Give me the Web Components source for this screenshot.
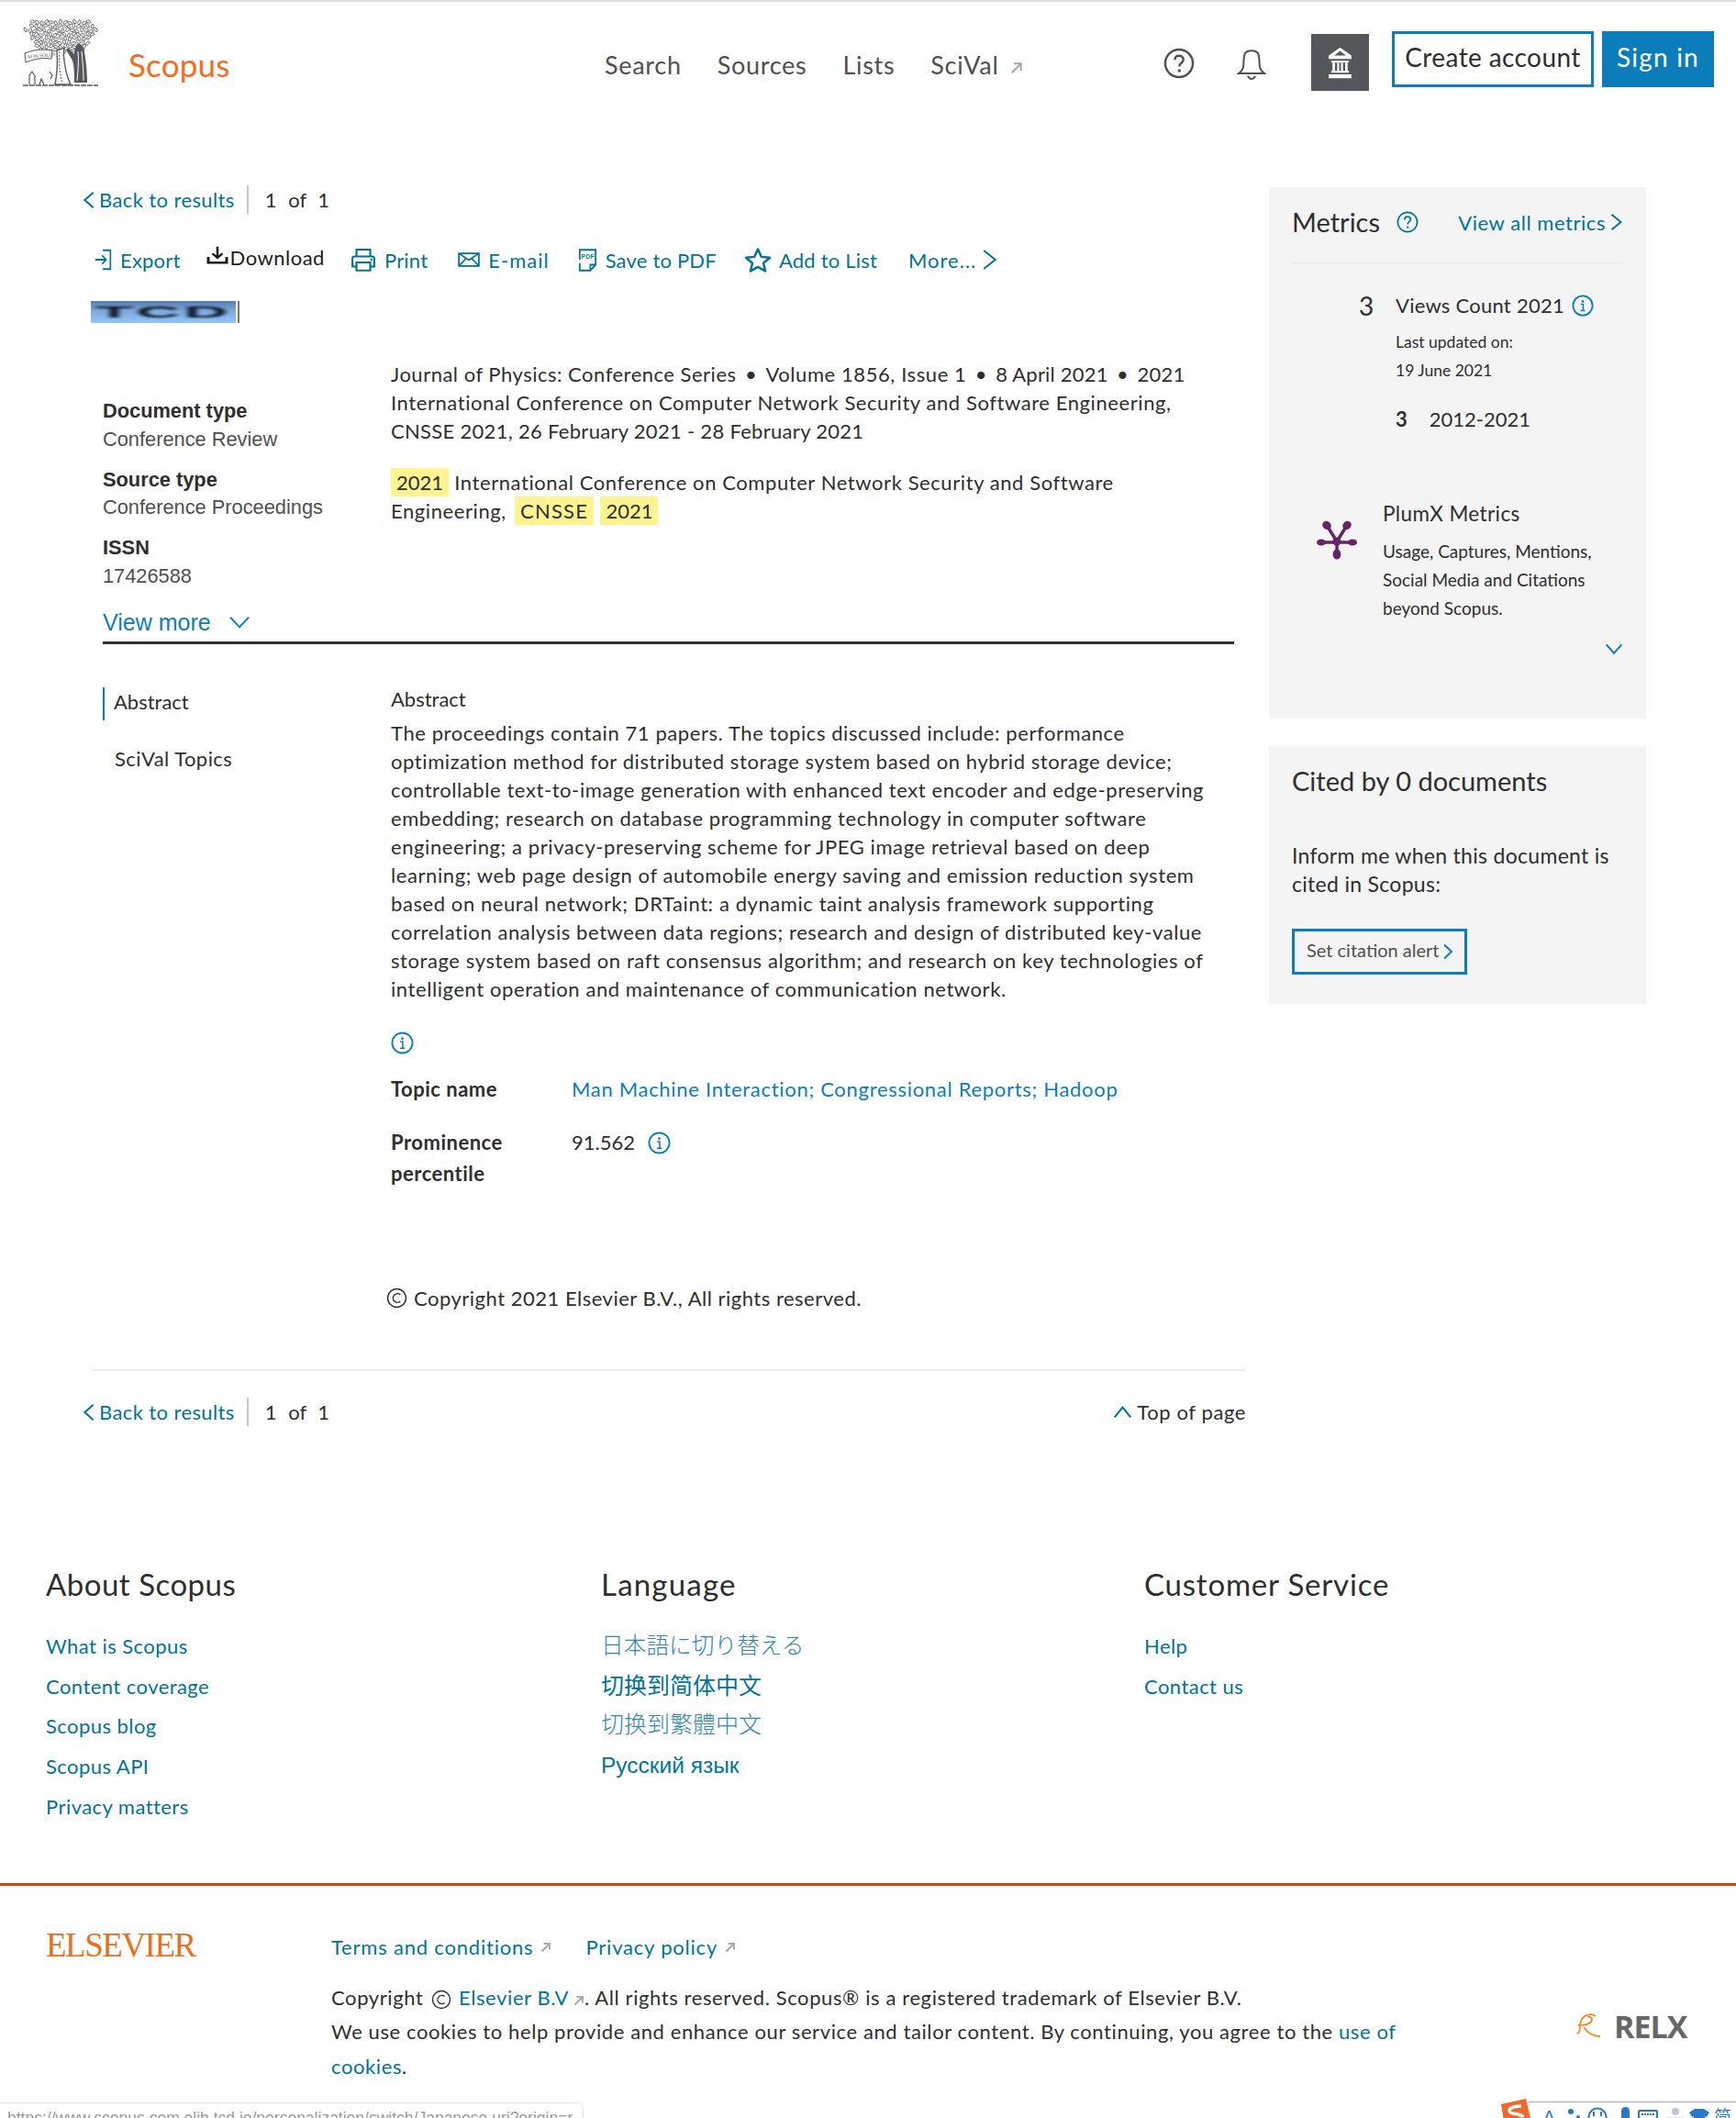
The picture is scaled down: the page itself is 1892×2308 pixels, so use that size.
<!DOCTYPE html>
<html lang="en">
<head>
<meta charset="utf-8">
<title>Scopus - Document details</title>
<style>
  html, body { margin: 0; padding: 0; background: #fff; }
  html { height: 2308px; overflow: hidden; }
  body { position: relative; height: 2308px; overflow: hidden; font-family: Lato, "Noto Sans", sans-serif; font-size: 22px; color: #2e2e2e; }
  sc-main { display: flex; padding-top: 62px; }
</style>
</head>
<body>
<sc-header></sc-header>
<sc-main>
  <sc-document></sc-document>
  <sc-sidebar></sc-sidebar>
</sc-main>
<sc-footer></sc-footer>
<sc-legal></sc-legal>
<sc-overlays></sc-overlays>

<script>
// chevrons and arrows keep their stroke width when stretched
const line = (d, w) => `<path d="${d}" fill="none" stroke="currentColor" stroke-width="${w}" vector-effect="non-scaling-stroke"/>`;

// icon set, all drawn on a 24 box
const ICONS = {
  help: `<circle cx="12" cy="12" r="10.6" fill="none" stroke="currentColor" stroke-width="1.7"/><path d="M8.8 9.4c0-2 1.4-3.2 3.3-3.2s3.2 1.2 3.2 2.9c0 2.6-3.1 2.6-3.1 5.4" fill="none" stroke="currentColor" stroke-width="1.7"/><circle cx="12.2" cy="17.6" r="1.2" fill="currentColor"/>`,
  info: `<circle cx="12" cy="12" r="10.6" fill="none" stroke="currentColor" stroke-width="1.8"/><circle cx="12" cy="7.4" r="1.3" fill="currentColor"/><path d="M9.8 10.6h2.6v7M9.6 17.6h5" fill="none" stroke="currentColor" stroke-width="1.5"/>`,
  bell: line("M1.500 18.500c2.500-1.500 4-3.500 4-7 0-3 .2-5 .8-7C6.900 2.500 8.500 1.500 12 1.500s5.100 1 5.700 3c.6 2 .8 4 .8 7 0 3.500 1.500 5.500 4 7z", 2) + line("M9 20.500c.7 1.300 1.800 2.200 3 2.200s2.300-.9 3-2.200", 2),
  bank: `<path d="M12 .5 3 6.500V9h18V6.500zM3 20.500h18V23.500H3z" fill="currentColor"/><path d="M12 3 7.400 6.500h9.200z" fill="#53565a"/><path d="M5 10.500h14v1.300H5zM5 18h14v1.300H5zM6 12h2v6H6zM9.700 12h1.600v6H9.700zM12.700 12h1.600v6h-1.600zM16 12h2v6h-2z" fill="currentColor"/>`,
  ext: line("M3 21 20 4M7 4h13v13", 2),
  left: line("M20 2 4 12l16 10", 2),
  right: line("M4 2l16 10L4 22", 2),
  down: line("M2 4l10 16L22 4", 2),
  up: line("M2 20 12 4l10 16", 2),
  export: `<path d="M11 2.500h9v19h-9M2 12h12.500M10 7.500l4.800 4.500-4.800 4.500" fill="none" stroke="currentColor" stroke-width="1.800"/>`,
  download: `<path d="M12 1v14M6.500 10l5.500 5.500 5.500-5.500" fill="none" stroke="currentColor" stroke-width="2.600"/><path d="M2 14.500v7.500h20v-7.500" fill="none" stroke="currentColor" stroke-width="3"/>`,
  print: `<path d="M6 9V2.500h12V9M6 18.500H2.500V11q0-2 2-2h15q2 0 2 2v7.500H18M6 14.500h12v7.500H6z" fill="none" stroke="currentColor" stroke-width="1.700"/><circle cx="19" cy="12" r="1" fill="currentColor"/>`,
  mail: `<path d="M2 4.500h20v15H2zM2 4.500l10 8 10-8M2 19.500l7.500-9.500M22 19.500 14.500 10" fill="none" stroke="currentColor" stroke-width="1.700"/>`,
  pdf: `<path d="M3 11.500V2h18v14.500L15 22H3v-7M21 16.500h-6V22" fill="none" stroke="currentColor" stroke-width="1.800"/><text x="12" y="10.500" font-size="7" font-weight="700" text-anchor="middle" fill="currentColor" font-family="Liberation Sans">PDF</text>`,
  star: `<path d="m12 2 3 7 7.500.7-5.700 5 1.700 7.300-6.500-3.900L5.500 22l1.700-7.300-5.700-5L9 9z" fill="none" stroke="currentColor" stroke-width="2" stroke-linejoin="round"/>`,
  copy: `<circle cx="12" cy="12" r="10.400" fill="none" stroke="currentColor" stroke-width="1.500"/><path d="M16 8.300a5 5 0 1 0 0 7.400" fill="none" stroke="currentColor" stroke-width="1.500"/>`
};

// small base for the elements: markup and style in an open shadow root
class ScElement extends HTMLElement {
  connectedCallback() {
    if (this.shadowRoot) return;
    this.attachShadow({ mode: "open" });
    this.shadowRoot.innerHTML = `<style>${this.styles()}</style>${this.markup()}`;
  }
  styles() { return ":host{display:block}"; }
  markup() { return "<slot></slot>"; }
}

class ScIco extends ScElement {
  styles() {
    const w = this.getAttribute("w") || 24, h = this.getAttribute("h") || w;
    return `:host{display:inline-block;width:${w}px;height:${h}px;flex:none;line-height:0}svg{width:100%;height:100%;display:block}`;
  }
  markup() {
    return `<svg viewBox="0 0 24 24" preserveAspectRatio="none">${ICONS[this.getAttribute("name")]}</svg>`;
  }
}
customElements.define("sc-ico", ScIco);

// Elsevier tree, drawn as lots of little leaves
class ScTree extends ScElement {
  styles() { return ":host{display:block;width:84px;height:74px}svg{display:block}"; }
  markup() {
    let leaves = "";
    for (let r = 0; r < 8; r++) {
      const cols = 16 - Math.abs(r - 2) * 1.2 | 0;
      for (let c = 0; c < cols; c++) {
        const x = 42 + (c - cols / 2 + 0.5) * 5.1 + (r % 2) * 1.5;
        const y = 3.500 + r * 4.400 + ((c * 7) % 3) * 0.8;
        const rot = (c * 47 + r * 31) % 180;
        leaves += `<ellipse cx="${x.toFixed(1)}" cy="${y.toFixed(1)}" rx="2.500" ry="1.400" transform="rotate(${rot} ${x.toFixed(1)} ${y.toFixed(1)})" fill="#fff" stroke="#55585c" stroke-width=".85"/>`;
      }
    }
    return `<svg width="84" height="74" viewBox="0 0 84 74">
      ${leaves}
      <path d="M36 72c2-10 3-24 2-37l8-3c-1 5-1 9 0 14 1 8 3 18 7 26z" fill="#fff" stroke="#55585c" stroke-width="1.400"/>
      <path d="M41 36c-1 12 0 24 3 35" stroke="#55585c" stroke-width="1" stroke-dasharray="2 1.500" fill="none"/>
      <path d="M3 38q14-6 30-3l-1 9q-14-2-28 4z" fill="#fff" stroke="#55585c" stroke-width="1"/>
      <text x="6" y="44" font-size="5.500" font-family="Liberation Serif" fill="#55585c" transform="rotate(-6 6 44)">NON SOLUS</text>
      <path d="M60 28c5-1 7 3 8 9 2 11 3 24 3 33H57c0-10 0-16-2-24l-7-12 2-2 7 7c0-4 1-8 3-11z" fill="#55585c"/>
      <path d="M61 36c1 10 0 22-1 32M65 36c1 10 2 22 2 32" stroke="#fff" stroke-width="1" fill="none"/>
      <path d="M1 73h82" stroke="#55585c" stroke-width="1.600" stroke-dasharray="6 1"/>
      <path d="M8 72V62l3-4 3 5v9M19 72l2-6 3 6M30 58l3 4-2 4" stroke="#55585c" stroke-width="1.200" fill="none"/>
    </svg>`;
  }
}
customElements.define("sc-tree", ScTree);

class ScHeader extends ScElement {
  styles() {
    return `:host{display:flex;height:138px;border-top:2px solid #dcdce2;box-sizing:content-box;align-items:flex-start}
    sc-tree{margin:18px 0 0 24px}
    .brand{margin:46px 0 0 32px;font-size:35px;line-height:44px;color:#f36d21;width:110px;letter-spacing:.2px}
    nav{display:flex;gap:39px;margin:49px 0 0 409px;font-size:27px;line-height:40px;color:#505050;width:525px;letter-spacing:.7px}
    nav sc-ico{color:#a5a5a5;margin:16px 0 0 12px}
    nav span{display:flex}
    .tools{margin-left:84px;display:flex;align-items:flex-start}
    .q{margin-top:50px;color:#505050}
    .bell{margin:51px 0 0 46px;color:#505050}
    .inst{margin:35px 0 0 49px;width:63px;height:62px;background:#53565a;color:#fff;display:flex;align-items:center;justify-content:center}
    .btn{box-sizing:border-box;height:61px;margin-top:32px;font-size:28px;display:flex;align-items:center;justify-content:center}
    .create{width:220px;margin-left:25px;border:3px solid #0c7dbb;color:#2e2e2e;padding-bottom:6px;letter-spacing:.4px}
    .sign{width:122px;margin-left:9px;background:#0c7dbb;color:#fff;padding-bottom:6px;letter-spacing:1.200px}`;
  }
  markup() {
    return `<sc-tree></sc-tree><div class="brand">Scopus</div>
    <nav><span>Search</span><span>Sources</span><span>Lists</span><span>SciVal<sc-ico name="ext" w="14" h="14"></sc-ico></span></nav>
    <div class="tools">
      <sc-ico class="q" name="help" w="34"></sc-ico>
      <sc-ico class="bell" name="bell" w="32" h="35"></sc-ico>
      <div class="inst"><sc-ico name="bank" w="33" h="35"></sc-ico></div>
      <div class="btn create">Create account</div><div class="btn sign">Sign in</div>
    </div>`;
  }
}
customElements.define("sc-header", ScHeader);

// Back to results | 1 of 1, used at top and bottom of the record
class ScPager extends ScElement {
  styles() {
    return `:host{display:flex;height:31px;align-items:center;padding-left:90px;font-size:22px;line-height:30px}
    a{display:flex;align-items:center;color:#007398;gap:4px;letter-spacing:.4px}
    i{display:block;width:2px;height:31px;background:#c8c8c8;margin:0 18px 0 13px}
    b{font-weight:400;word-spacing:7px}
    .end{margin-left:auto;margin-right:25px;color:#2e2e2e;display:flex;align-items:center;gap:5px;letter-spacing:.6px}
    .end sc-ico{color:#007398}`;
  }
  markup() {
    const top = this.hasAttribute("top");
    return `<a><sc-ico name="left" w="14" h="20"></sc-ico>Back to results</a><i></i><b>1 of 1</b>
    ${top ? `<div class="end"><sc-ico name="up" w="21" h="16"></sc-ico>Top of page</div>` : ""}`;
  }
}
customElements.define("sc-pager", ScPager);

class ScActions extends ScElement {
  styles() {
    return `:host{display:flex;height:32px;margin-top:34px;padding-left:102px;gap:30px;align-items:center;color:#007398;font-size:22px;letter-spacing:.2px}
    span{display:flex;align-items:center;gap:8px}
    .ex{gap:7px}
    .dl{color:#1c1c1c;gap:2px;margin:-6px 0 0 -2px;letter-spacing:.5px}.dl sc-ico{margin-top:-4px}
    .pr{margin-left:-3px}
    .em{margin-left:2px;letter-spacing:1px}
    .mo{margin-left:4px;letter-spacing:1px}`;
  }
  markup() {
    return `<span class="ex"><sc-ico name="export" w="22" h="26"></sc-ico>Export</span>
    <span class="dl"><sc-ico name="download" w="24" h="20"></sc-ico>Download</span>
    <span class="pr"><sc-ico name="print" w="30" h="28"></sc-ico>Print</span>
    <span class="em"><sc-ico name="mail" w="26" h="22"></sc-ico>E-mail</span>
    <span><sc-ico name="pdf" w="23" h="27"></sc-ico>Save to PDF</span>
    <span><sc-ico name="star" w="30" h="29"></sc-ico>Add to List</span>
    <span class="mo">More...<sc-ico name="right" w="19" h="24" style="margin-left:-3px"></sc-ico></span>`;
  }
}
customElements.define("sc-actions", ScActions);

// the institution's low-res banner in the record
class ScBanner extends ScElement {
  styles() {
    return `:host{display:flex;margin:29px 0 0 99px;height:24px}
    div{width:158px;height:24px;background:linear-gradient(#587aac,#7fa9dd 45%,#93c6fb);overflow:hidden;display:flex;justify-content:center;align-items:center}
    span{display:block;font:700 17px/24px "Liberation Sans",sans-serif;color:#0a1220;letter-spacing:1px;transform:scale(3.900,1) translateY(1px);filter:blur(.8px)}
    i{display:block;width:2px;height:24px;background:#777;margin-left:2px}`;
  }
  markup() { return `<div><span>TCD</span></div><i></i>`; }
}
customElements.define("sc-banner", ScBanner);

class ScRecord extends ScElement {
  styles() {
    return `:host{display:grid;grid-template-columns:314px 1fr;margin:40px 0 0 112px;width:1233px;height:307px;border-bottom:3px solid #2e2e2e;line-height:31px}
    .meta{padding-top:41px;font:21.800px/30.500px "Liberation Sans",sans-serif}
    dt{font-weight:700;color:#2e2e2e;margin-top:13.500px}dt:first-child{margin-top:0}
    dd{margin:0;color:#505050}dl{margin:0}
    .more{display:flex;align-items:center;margin-top:17px;color:#0c7dbb;font-size:25px;line-height:36px;gap:19px}
    p{margin:0 0 25px;letter-spacing:.58px}
    .j1{letter-spacing:.5px}.j2{letter-spacing:.58px}.j3{letter-spacing:.2px}
    .sep{word-spacing:-1.100px;letter-spacing:.2px}
    .tight{letter-spacing:.3px}
    mark{display:inline-block;background:#fff48f;color:inherit;padding:0 6px;height:31px;letter-spacing:0}
    mark.w{letter-spacing:1.200px;margin-left:3px}
    mark.n{margin-left:1px}`;
  }
  markup() {
    return `<div class="meta"><dl>
      <dt>Document type</dt><dd>Conference Review</dd>
      <dt>Source type</dt><dd>Conference Proceedings</dd>
      <dt>ISSN</dt><dd>17426588</dd></dl>
      <div class="more">View more<sc-ico name="down" w="24" h="16"></sc-ico></div>
    </div>
    <div>
      <p><span class="j1">Journal of Physics: Conference Series</span><span class="sep"> &nbsp;•&nbsp; </span><span class="j2">Volume 1856, Issue 1</span><span class="sep"> &nbsp;•&nbsp; </span><span class="j3">8 April 2021</span><span class="sep"> &nbsp;•&nbsp; </span><span class="j3">2021</span><br>International Conference on Computer Network Security and Software Engineering,<br><span class="tight">CNSSE 2021, 26 February 2021 - 28 February 2021</span></p>
      <p><mark>2021</mark> International Conference on Computer Network Security and Software<br>Engineering, <mark class="w">CNSSE</mark> <mark class="n">2021</mark></p>
    </div>`;
  }
}
customElements.define("sc-record", ScRecord);

class ScAbstract extends ScElement {
  styles() {
    return `:host{display:grid;grid-template-columns:314px 1fr;margin-left:112px;line-height:31px}
    .side{padding-top:47px}
    .cur{border-left:2px solid #0c7dbb;padding-left:10px;height:36px;line-height:32px}
    .sc{margin:26px 0 0 13px;line-height:32px;letter-spacing:.45px}
    .body{padding-top:44px}
    p{margin:6px 0 0;letter-spacing:.58px}
    .i{display:block;margin-top:31px;color:#0c7dbb}
    .row{display:grid;grid-template-columns:197px 1fr;margin-top:22px;line-height:31px}
    .row + .row{margin-top:26px;line-height:34px}
    .lab{font-weight:700;color:#2e2e2e;letter-spacing:.5px}
    a{color:#0c7dbb;letter-spacing:.7px}
    .val{display:flex;align-items:flex-start;gap:14px}
    .val sc-ico{color:#0c7dbb;margin-top:5px}
    .copy{display:flex;align-items:center;gap:7px;margin:103px 0 0 -5px;letter-spacing:.5px}`;
  }
  markup() {
    return `<div class="side"><div class="cur">Abstract</div><div class="sc">SciVal Topics</div></div>
    <div class="body">
      <div>Abstract</div>
      <p>The proceedings contain 71 papers. The topics discussed include: performance<br>optimization method for distributed storage system based on hybrid storage device;<br>controllable text-to-image generation with enhanced text encoder and edge-preserving<br>embedding; research on database programming technology in computer software<br>engineering; a privacy-preserving scheme for JPEG image retrieval based on deep<br>learning; web page design of automobile energy saving and emission reduction system<br>based on neural network; DRTaint: a dynamic taint analysis framework supporting<br>correlation analysis between data regions; research and design of distributed key-value<br>storage system based on raft consensus algorithm; and research on key technologies of<br>intelligent operation and maintenance of communication network.</p>
      <sc-ico class="i" name="info" w="25"></sc-ico>
      <div class="row"><div class="lab">Topic name</div><a>Man Machine Interaction; Congressional Reports; Hadoop</a></div>
      <div class="row"><div class="lab">Prominence<br>percentile</div><div class="val">91.562<sc-ico name="info" w="25"></sc-ico></div></div>
      <div class="copy"><sc-ico name="copy" w="23"></sc-ico>Copyright 2021 Elsevier B.V., All rights reserved.</div>
    </div>`;
  }
}
customElements.define("sc-abstract", ScAbstract);

class ScDocument extends ScElement {
  styles() {
    return `:host{display:block;width:1383px;flex:none}
    hr{border:0;height:2px;background:#eee;margin:62px 0 29px 99px;width:1259px}`;
  }
  markup() {
    return `<sc-pager></sc-pager><sc-actions></sc-actions><sc-banner></sc-banner>
    <sc-record></sc-record><sc-abstract></sc-abstract><hr><sc-pager top></sc-pager>`;
  }
}
customElements.define("sc-document", ScDocument);

class ScMetrics extends ScElement {
  styles() {
    return `:host{display:block;box-sizing:border-box;width:411px;height:579px;margin-top:2px;background:#f4f4f4;padding:20px 25px 0;color:#2e2e2e}
    .top{display:flex;align-items:center;height:36px;padding-bottom:26px;border-bottom:2px solid #eee}
    .top h2{font-size:29px;font-weight:400;margin:0;line-height:36px}
    .top sc-ico{color:#007398}
    .top .q{margin-left:18px}
    .all{margin-left:auto;color:#007398;display:flex;align-items:center;gap:4px;font-size:22px;letter-spacing:.55px}
    .v{display:flex;margin-top:29px;line-height:32px;font-size:22px;letter-spacing:.25px}
    .n{font-size:28px;width:40px;text-align:left;margin-left:73px}
    .v sc-ico{color:#0c7dbb;margin:4px 0 0 8px}
    .sub{margin:8px 0 0 113px;font-size:17.500px;line-height:31px}
    .range{margin:22px 0 0 113px;font-size:22px;line-height:32px;display:flex;gap:24px}
    .range b{font-weight:700}
    .plum{display:flex;margin-top:70px}
    .plum svg{margin:24px 0 0 27px;flex:none}
    .ptx{margin-left:28px}
    .ptx div{font-size:22.500px;line-height:34px;letter-spacing:.4px}
    .ptx p{margin:8px 0 0;font-size:19px;line-height:31px}
    .chev{display:flex;justify-content:flex-end;margin-top:22px;color:#0c7dbb}`;
  }
  markup() {
    return `<div class="top"><h2>Metrics</h2><sc-ico class="q" name="help" w="24"></sc-ico>
      <div class="all">View all metrics<sc-ico name="right" w="15" h="20"></sc-ico></div></div>
    <div class="v"><div class="n">3</div>Views Count 2021<sc-ico name="info" w="24"></sc-ico></div>
    <div class="sub">Last updated on:<br>19 June 2021</div>
    <div class="range"><b>3</b>2012-2021</div>
    <div class="plum">
      <svg width="44" height="44" viewBox="0 0 44 44"><g stroke="#662266" stroke-linecap="round"><path d="M22 23 12 7M22 23 32 7M22 24H5M22 24h17M22 24v12" stroke-width="3.400"/></g>
      <g fill="#662266"><ellipse cx="11" cy="5.500" rx="5" ry="4.400" transform="rotate(40 11 5.500)"/><ellipse cx="33" cy="5.500" rx="5" ry="4.400" transform="rotate(-40 33 5.500)"/><ellipse cx="5" cy="24" rx="5" ry="3.600"/><ellipse cx="39" cy="24" rx="5" ry="3.600"/><ellipse cx="22" cy="37" rx="4.400" ry="5.500"/><circle cx="22" cy="23" r="4.500"/></g></svg>
      <div class="ptx"><div>PlumX Metrics</div><p>Usage, Captures, Mentions,<br>Social Media and Citations<br>beyond Scopus.</p></div>
    </div>
    <div class="chev"><sc-ico name="down" w="20" h="14"></sc-ico></div>`;
  }
}
customElements.define("sc-metrics", ScMetrics);

class ScCited extends ScElement {
  styles() {
    return `:host{display:block;box-sizing:border-box;width:411px;height:281px;margin-top:30px;background:#f4f4f4;padding:19px 25px 0;color:#2e2e2e}
    h2{margin:0;font-size:29px;font-weight:400;line-height:38px}
    p{margin:47px 0 0;font-size:23px;line-height:31px;letter-spacing:.3px}
    .b{box-sizing:border-box;display:inline-flex;align-items:center;gap:3px;margin-top:33px;height:50px;width:191px;border:3px solid #0c7dbb;padding:0 0 4px 13px;font-size:20px;color:#505050}
    .b sc-ico{color:#0c7dbb;margin-top:3px}`;
  }
  markup() {
    return `<h2>Cited by 0 documents</h2><p>Inform me when this document is<br>cited in Scopus:</p>
    <div class="b">Set citation alert<sc-ico name="right" w="12" h="18"></sc-ico></div>`;
  }
}
customElements.define("sc-cited", ScCited);

class ScSidebar extends ScElement {
  styles() { return ":host{display:block;width:411px;flex:none}"; }
  markup() { return "<sc-metrics></sc-metrics><sc-cited></sc-cited>"; }
}
customElements.define("sc-sidebar", ScSidebar);

class ScFooter extends ScElement {
  styles() {
    return `:host{display:grid;grid-template-columns:605px 592px 1fr;padding:154px 0 0 50px;height:344px;box-sizing:content-box;color:#007398}
    h3{margin:0 0 35px;font-size:33px;font-weight:400;line-height:36px;color:#2e2e2e;letter-spacing:.8px}
    a{display:block;font-size:22px;line-height:30px;margin-bottom:13.700px;letter-spacing:.45px}
    .ja,.sc,.tc,.ru{display:block;margin-bottom:0;white-space:nowrap;letter-spacing:0}
    .ja{font:300 24.700px/30px "Noto Sans CJK JP",sans-serif;margin:-3px 0 0 0;color:#2f87ae}
    .sc{font:400 25px/30px "Noto Sans CJK SC",sans-serif;margin-top:14px}
    .tc{font:300 25px/30px "Noto Sans CJK TC",sans-serif;margin-top:12px;color:#2f87ae}
    .ru{font:24.500px/30px "Liberation Sans",sans-serif;margin-top:17px}`;
  }
  markup() {
    return `<div><h3 style="letter-spacing:.5px">About Scopus</h3><a>What is Scopus</a><a>Content coverage</a><a>Scopus blog</a><a>Scopus API</a><a>Privacy matters</a></div>
    <div><h3 style="letter-spacing:1.200px">Language</h3><a class="ja" lang="ja">日本語に切り替える</a><a class="sc" lang="zh-CN">切换到简体中文</a><a class="tc" lang="zh-TW">切换到繁體中文</a><a class="ru" lang="ru">Русский язык</a></div>
    <div><h3>Customer Service</h3><a>Help</a><a>Contact us</a></div>`;
  }
}
customElements.define("sc-footer", ScFooter);

class ScLegal extends ScElement {
  styles() {
    return `:host{display:flex;border-top:3px solid #cf4b00;padding:48px 0 0 50px;height:253px;box-sizing:content-box;align-items:flex-start;color:#2e2e2e}
    .els{width:311px;flex:none;font:37px/38px "Liberation Serif",serif;color:#e9711c;letter-spacing:-1.500px;margin-top:-2px}
    .txt{width:1200px;flex:none;font-size:22px;line-height:37.500px;letter-spacing:.6px}
    a{color:#007398}
    .links{display:flex;gap:37px;margin-bottom:17px;letter-spacing:.8px}
    .links span{display:flex;align-items:center;gap:8px}
    sc-ico{color:#aaa}
    .in{display:inline-block;vertical-align:-1px;margin:0 0 0 5px}
    .c{vertical-align:-5px;color:#2e2e2e;margin:0 2px}
    .relx{display:flex;align-items:center;gap:13px;margin:83px 0 0 155px;font:700 34px/44px "Open Sans",sans-serif;color:#666;letter-spacing:-1px}`;
  }
  markup() {
    return `<div class="els">ELSEVIER</div>
    <div class="txt">
      <div class="links"><span><a>Terms and conditions</a><sc-ico name="ext" w="12" h="12"></sc-ico></span><span><a>Privacy policy</a><sc-ico name="ext" w="12" h="12"></sc-ico></span></div>
      Copyright <sc-ico class="c" name="copy" w="22"></sc-ico> <a>Elsevier B.V</a><sc-ico class="in" name="ext" w="12" h="12"></sc-ico>. All rights reserved. Scopus® is a registered trademark of Elsevier B.V.<br>
      We use cookies to help provide and enhance our service and tailor content. By continuing, you agree to the <a>use of<br>cookies</a>.
    </div>
    <div class="relx"><svg width="30" height="28" viewBox="0 0 30 28"><path d="M23 3C19-.5 10 1 7 8c-2 5 0 8-2 12-.5 1.500-1 2-2.500 1.500M4 13c6 0 14-1 15-6 .5-3-3-4-5-3M10 15c4 6 9 10 18 10" fill="none" stroke="#f58a1f" stroke-width="1.800"/></svg>RELX</div>`;
  }
}
customElements.define("sc-legal", ScLegal);

// things that lie over the page: link status tip and the IME toolbar
class ScOverlays extends ScElement {
  styles() {
    return `:host{display:block}
    .tip{position:absolute;left:0;top:2291px;width:636px;height:40px;background:#fff;border-top:1px solid #e6e6e6;border-right:1px solid #e6e6e6;border-radius:0 6px 0 0;box-sizing:border-box;padding:3px 0 0 8px;font:17.500px/26px "Liberation Sans",sans-serif;color:#9a9a9a;white-space:nowrap;overflow:hidden}
    .ime{position:absolute;left:1636px;top:2287px;width:256px;height:40px;overflow:hidden}
    .ime svg{display:block}`;
  }
  markup() {
    return `<div class="tip">https://www.scopus.com.elib.tcd.ie/personalization/switch/Japanese.uri?origin=r</div>
    <div class="ime"><svg width="256" height="40" viewBox="0 0 256 40">
      <path d="M30 3.500H256" stroke="#b3b7c6" stroke-width="1.500"/>
      <path d="M0 6 27 0l7 30H4z" fill="#f2672a"/>
      <path d="M22 8C12 8 8 11 9 14c1 3 13 2 15 6" fill="none" stroke="#fff" stroke-width="3.500"/>
      <text x="46" y="26" font-family="Liberation Sans" font-size="19" fill="#2b78c8">A</text>
      <circle cx="76" cy="14" r="3" fill="#2b78c8"/><circle cx="84" cy="20" r="2" fill="#2b78c8"/>
      <circle cx="105" cy="20" r="9.500" fill="none" stroke="#2b78c8" stroke-width="2"/><path d="M101 14v5M109 14v5" stroke="#2b78c8" stroke-width="2"/>
      <rect x="131" y="9" width="9" height="16" rx="4.500" fill="#2b78c8"/>
      <rect x="150" y="13" width="20" height="12" rx="1" fill="none" stroke="#2b78c8" stroke-width="2"/><path d="M153 17h14" stroke="#2b78c8" stroke-width="2" stroke-dasharray="2 1"/>
      <circle cx="190" cy="14" r="4" fill="#c0c6d6"/><path d="M181 22h18" stroke="#c0c6d6" stroke-width="3"/>
      <path d="M205 15l6-4h10l6 4-3 5-2-1v6h-12v-6l-2 1z" fill="#2b78c8"/>
      <text x="232" y="27" font-family="Noto Sans CJK SC" font-size="19" fill="#2b78c8">简</text>
    </svg></div>`;
  }
}
customElements.define("sc-overlays", ScOverlays);
</script>
</body>
</html>
